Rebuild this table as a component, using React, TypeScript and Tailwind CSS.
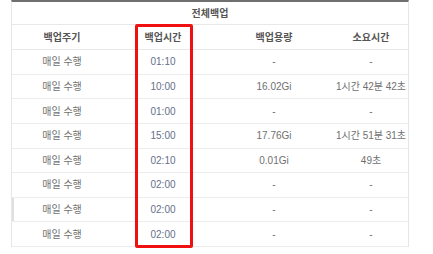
const rows = [
  { cycle: '매일 수행', time: '01:10', size: '-', took: '-' },
  { cycle: '매일 수행', time: '10:00', size: '16.02Gi', took: '1시간 42분 42초' },
  { cycle: '매일 수행', time: '01:00', size: '-', took: '-' },
  { cycle: '매일 수행', time: '15:00', size: '17.76Gi', took: '1시간 51분 31초' },
  { cycle: '매일 수행', time: '02:10', size: '0.01Gi', took: '49초' },
  { cycle: '매일 수행', time: '02:00', size: '-', took: '-' },
  { cycle: '매일 수행', time: '02:00', size: '-', took: '-' },
  { cycle: '매일 수행', time: '02:00', size: '-', took: '-' },
];

const cols = 'grid grid-cols-[100px_102px_120px_74px]';

export default function App() {
  return (
    <div
      className="w-[433px] h-[254px] bg-white overflow-hidden"
      style={{ fontFamily: '"Liberation Sans", "Noto Sans CJK KR", sans-serif' }}
    >
      <div className="relative ml-[11px] w-[398px] border-t-2 border-t-[#6f6f6f] border-x border-x-[#e6e6e6]">
        {/* 제목 */}
        <div className="h-[23px] border-b border-[#e8e8e8] flex items-center justify-center text-[10px] font-bold text-[#555]">
          전체백업
        </div>

        {/* 헤더 */}
        <div className={`${cols} h-[25px] border-b border-[#e8e8e8] text-[10px] font-bold text-[#555]`}>
          <div className="flex items-center justify-center">백업주기</div>
          <div className="flex items-center justify-center">백업시간</div>
          <div className="flex items-center justify-center">백업용량</div>
          <div className="flex items-center justify-center">소요시간</div>
        </div>

        {rows.map((r, i) => (
          <div
            key={i}
            className={`${cols} h-[24.625px] border-b border-[#ececec] text-[10px] text-[#707070] ${i === 6 ? 'shadow-[inset_2px_0_0_#e0e0e0]' : ''}`}
          >
            <div className="flex items-center justify-center">{r.cycle}</div>
            <div className="flex items-center justify-center text-[#66708a]">{r.time}</div>
            <div className="flex items-center justify-center">{r.size}</div>
            <div className="flex items-center justify-center whitespace-nowrap">{r.took}</div>
          </div>
        ))}

        {/* 강조 박스 */}
        <div className="absolute left-[123px] top-[22px] w-[58px] h-[224px] border-[3px] border-[#f01010] rounded-[2px] pointer-events-none" />
      </div>
    </div>
  );
}
